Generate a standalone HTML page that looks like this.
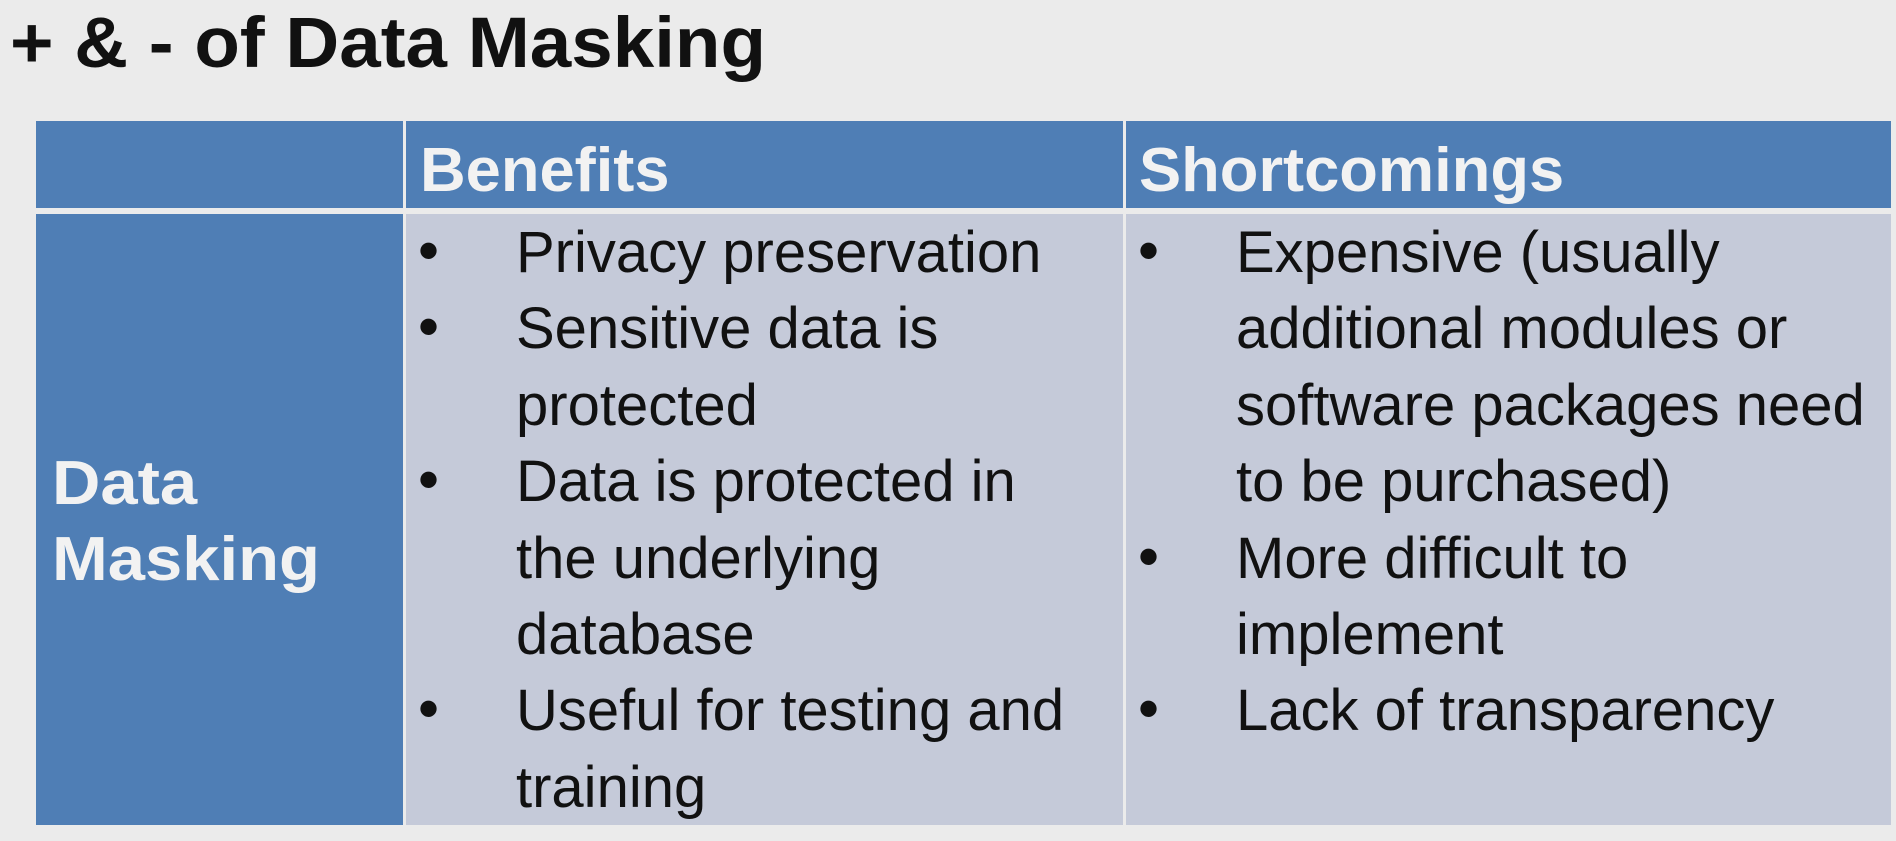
<!DOCTYPE html>
<html><head><meta charset="utf-8"><style>
*{margin:0;padding:0}
body{width:1896px;height:841px;background:#ebebeb;position:relative;overflow:hidden;font-family:"Liberation Sans",sans-serif}
.t{position:absolute;left:10px;top:4px;font-weight:bold;font-size:71px;line-height:80px;color:#111;transform:scaleX(1.05);transform-origin:left;white-space:nowrap}
.c{position:absolute}
.h{background:#4f7eb5}
.b{background:#c5cad9}
.ht{position:absolute;font-weight:bold;font-size:62px;line-height:62px;color:#f2f2f2;transform:scaleX(1.02);transform-origin:left;white-space:nowrap}
.l{position:absolute;font-size:58px;line-height:76.4px;color:#111;white-space:nowrap;transform:scaleX(1.0);transform-origin:left}
.bl{position:absolute;font-size:60px;line-height:76.4px;color:#111}
</style></head><body>
<div class="t">+ &amp; - of Data Masking</div>
<div class="c h" style="left:36px;top:121px;width:367px;height:87px"></div>
<div class="c h" style="left:406px;top:121px;width:717px;height:87px"></div>
<div class="c h" style="left:1126px;top:121px;width:765px;height:87px"></div>
<div class="c h" style="left:36px;top:214px;width:367px;height:611px"></div>
<div class="c b" style="left:406px;top:214px;width:717px;height:611px"></div>
<div class="c b" style="left:1126px;top:214px;width:765px;height:611px"></div>
<div class="ht" style="left:420px;top:140px">Benefits</div>
<div class="ht" style="left:1139px;top:140px">Shortcomings</div>
<div class="ht" style="left:52px;top:446px;line-height:76px;transform:scaleX(1.08)">Data<br>Masking</div>

<div class="bl" style="left:418px;top:213px">•<br>•<br><br>•<br><br><br>•</div>
<div class="l" style="left:516px;top:215px">Privacy preservation<br>Sensitive data is<br>protected<br>Data is protected in<br>the underlying<br>database<br>Useful for testing and<br>training</div>

<div class="bl" style="left:1138px;top:213px">•<br><br><br><br>•<br><br>•</div>
<div class="l" style="left:1236px;top:215px">Expensive (usually<br>additional modules or<br>software packages need<br>to be purchased)<br>More difficult to<br>implement<br>Lack of transparency</div>
</body></html>
